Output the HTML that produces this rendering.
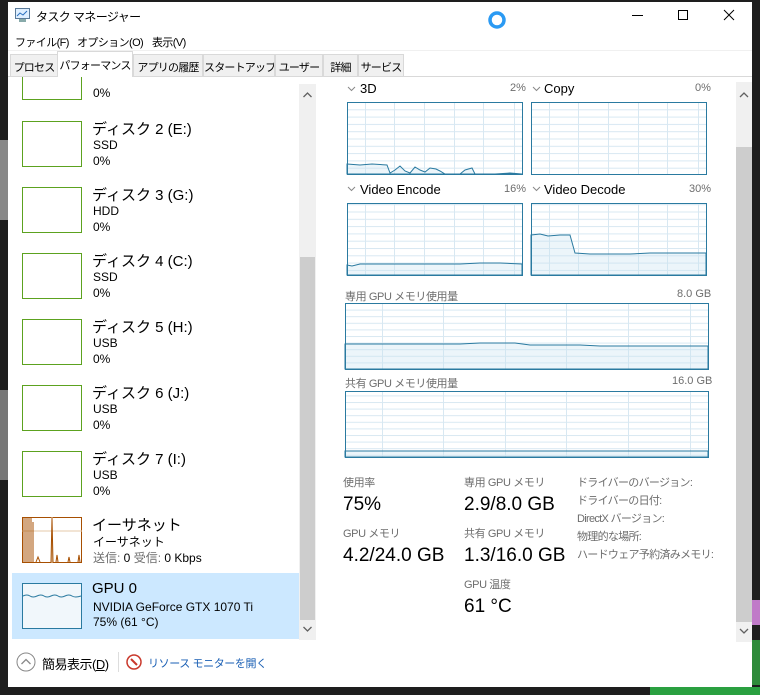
<!DOCTYPE html>
<html><head><meta charset="utf-8"><style>
*{margin:0;padding:0;box-sizing:border-box}
body{width:760px;height:695px;background:#1e1e1e;position:relative;overflow:hidden;font-family:"Liberation Sans","Noto Sans CJK JP",sans-serif;color:#000}
.a{position:absolute;white-space:nowrap}
#win{position:absolute;left:8px;top:2px;width:744px;height:685px;background:#fff}
.t{font-size:12px}
.m{font-size:11px;letter-spacing:-0.6px}
.g{color:#6d6d6d}
.tab{position:absolute;top:54px;height:22px;font-size:11px;letter-spacing:-0.8px;white-space:nowrap;overflow:hidden;padding:4px 0 0;text-align:center;background:#f0f0f0;border:1px solid #d9d9d9;border-bottom:none}
.th{position:absolute;left:22px;width:60px;height:46px;border:1px solid #5ca21f;background:#fff}
.n{font-size:15px}
.s{font-size:12px}
.sm{font-size:11px;letter-spacing:-0.4px}
</style></head><body>
<div class="a" style="left:0;top:140px;width:8px;height:80px;background:#888"></div>
<div class="a" style="left:0;top:390px;width:8px;height:90px;background:#777"></div>
<div class="a" style="left:752px;top:600px;width:8px;height:25px;background:#c07ac8"></div>
<div class="a" style="left:752px;top:640px;width:8px;height:45px;background:#2e8b3a"></div>
<div class="a" style="left:650px;top:687px;width:110px;height:8px;background:#2aa040"></div>
<div id="win"></div>
<!-- title -->
<svg class="a" style="left:15px;top:8px" width="16" height="15"><rect x="0.5" y="0.5" width="14" height="10" fill="#dfefff" stroke="#5a7a99"/><polyline points="2,8 5,5 8,7 12,3" fill="none" stroke="#2a70c0"/><rect x="4" y="11" width="7" height="3" fill="#8aa"/></svg>
<div class="a m" style="left:36px;top:8px;font-size:12px">タスク マネージャー</div>
<svg class="a" style="left:487px;top:10px" width="20" height="20"><circle cx="10" cy="10" r="7" fill="none" stroke="#2b9af3" stroke-width="3.5"/></svg>
<div class="a" style="left:632px;top:15px;width:11px;height:1px;background:#000"></div>
<div class="a" style="left:678px;top:10px;width:10px;height:10px;border:1px solid #000"></div>
<svg class="a" style="left:723px;top:9px" width="12" height="12"><path d="M1 1L11 11M11 1L1 11" stroke="#000"/></svg>
<!-- menu -->
<div class="a m" style="left:15px;top:34px">ファイル(F)</div>
<div class="a m" style="left:77px;top:34px">オプション(O)</div>
<div class="a m" style="left:152px;top:34px">表示(V)</div>
<div class="a" style="left:8px;top:50px;width:744px;height:1px;background:#f0f0f0"></div>
<!-- tabs -->
<div class="tab" style="left:10px;width:48px">プロセス</div>
<div class="tab" style="left:57px;top:51px;height:26px;width:76px;background:#fff;padding-top:5px;z-index:2">パフォーマンス</div>
<div class="tab" style="left:133px;width:70px">アプリの履歴</div>
<div class="tab" style="left:203px;width:72px">スタートアップ</div>
<div class="tab" style="left:275px;width:48px">ユーザー</div>
<div class="tab" style="left:323px;width:35px">詳細</div>
<div class="tab" style="left:358px;width:46px">サービス</div>
<div class="a" style="left:8px;top:76px;width:744px;height:1px;background:#d9d9d9"></div>
<!-- left list -->
<div class="a" style="left:22px;top:77px;width:60px;height:23px;border:1px solid #5ca21f;border-top:none"></div>
<div class="a s" style="left:93px;top:86px">0%</div>
<div class="th" style="top:121px"></div><div class="a n" style="left:92px;top:118px">ディスク 2 (E:)</div><div class="a s" style="left:93px;top:138px">SSD</div><div class="a s" style="left:93px;top:154px">0%</div>
<div class="th" style="top:187px"></div><div class="a n" style="left:92px;top:184px">ディスク 3 (G:)</div><div class="a s" style="left:93px;top:204px">HDD</div><div class="a s" style="left:93px;top:220px">0%</div>
<div class="th" style="top:253px"></div><div class="a n" style="left:92px;top:250px">ディスク 4 (C:)</div><div class="a s" style="left:93px;top:270px">SSD</div><div class="a s" style="left:93px;top:286px">0%</div>
<div class="th" style="top:319px"></div><div class="a n" style="left:92px;top:316px">ディスク 5 (H:)</div><div class="a s" style="left:93px;top:336px">USB</div><div class="a s" style="left:93px;top:352px">0%</div>
<div class="th" style="top:385px"></div><div class="a n" style="left:92px;top:382px">ディスク 6 (J:)</div><div class="a s" style="left:93px;top:402px">USB</div><div class="a s" style="left:93px;top:418px">0%</div>
<div class="th" style="top:451px"></div><div class="a n" style="left:92px;top:448px">ディスク 7 (I:)</div><div class="a s" style="left:93px;top:468px">USB</div><div class="a s" style="left:93px;top:484px">0%</div>
<svg class="a" style="left:22px;top:517px" width="60" height="46"><rect x="0.5" y="0.5" width="59" height="45" fill="#fff" stroke="#a74f01"/><line x1="0" y1="14" x2="60" y2="14" stroke="#e4c9a8"/><line x1="30" y1="0" x2="30" y2="46" stroke="#e4c9a8"/><path d="M1 45V1M3 45V1M5 45V1M7 45V1M9 45V1M11 45V5M14 45L16 40 18 45M29 45L30 1 31 45M34 45L35 38 36 45M46 45L47 40 48 45M56 45L57 38 58 45" stroke="#a74f01" fill="none"/></svg>
<div class="a n" style="left:92px;top:514px">イーサネット</div><div class="a s" style="left:93px;top:533px">イーサネット</div><div class="a s g" style="left:93px;top:549px">送信: <span style="color:#000">0</span> 受信: <span style="color:#000">0 Kbps</span></div>
<div class="a" style="left:12px;top:573px;width:287px;height:66px;background:#cce8ff"></div>
<svg class="a" style="left:22px;top:583px" width="60" height="46"><rect x="0.5" y="0.5" width="59" height="45" fill="#f1f7fb" stroke="#2a7aa0"/><path d="M1 13 Q5 11 8 13 T15 13 T22 13 T29 13 T36 13 T43 13 T50 13 T59 13" stroke="#2a7aa0" fill="none"/></svg>
<div class="a n" style="left:92px;top:580px">GPU 0</div><div class="a s" style="left:93px;top:600px">NVIDIA GeForce GTX 1070 Ti</div><div class="a s" style="left:93px;top:615px">75% (61 °C)</div>
<!-- left scrollbar -->
<div class="a" style="left:299px;top:84px;width:17px;height:556px;background:#f0f0f0"></div>
<div class="a" style="left:300px;top:257px;width:15px;height:363px;background:#cdcdcd"></div>
<svg class="a" style="left:299px;top:84px" width="17" height="556"><path d="M4.5 13L8.5 9 12.5 13M4.5 543L8.5 547 12.5 543" fill="none" stroke="#606060" stroke-width="1.3"/></svg>
<!-- bottom -->
<svg class="a" style="left:16px;top:652px" width="20" height="20"><circle cx="10" cy="10" r="9" fill="none" stroke="#888"/><path d="M5.5 12L10 7.5 14.5 12" fill="none" stroke="#888" stroke-width="1.3"/></svg>
<div class="a" style="left:42px;top:654px;font-size:13px;letter-spacing:-0.5px">簡易表示(<u>D</u>)</div>
<div class="a" style="left:118px;top:652px;width:1px;height:20px;background:#ddd"></div>
<svg class="a" style="left:126px;top:654px" width="16" height="16"><circle cx="8" cy="8" r="7" fill="#fff" stroke="#c9382b" stroke-width="1.5"/><path d="M5 5L11 11" stroke="#c9382b" stroke-width="2"/></svg>
<div class="a sm" style="left:148px;top:655px;color:#1a5fb4">リソース モニターを開く</div>
<!-- right scrollbar -->
<div class="a" style="left:736px;top:82px;width:16px;height:560px;background:#f0f0f0"></div>
<div class="a" style="left:736px;top:147px;width:16px;height:475px;background:#cdcdcd"></div>
<svg class="a" style="left:736px;top:82px" width="16" height="560"><path d="M4 15L8 11 12 15M4 547L8 551 12 547" fill="none" stroke="#606060" stroke-width="1.3"/></svg>
<!-- graph titles -->
<svg class="a" style="left:0;top:0" width="760" height="200"><g fill="none" stroke="#888"><path d="M348 87L351.5 90.5 355 87M533 87L536.5 90.5 540 87M348 187L351.5 190.5 355 187M533 187L536.5 190.5 540 187"/></g></svg>
<div class="a" style="left:360px;top:81px;font-size:13px">3D</div><div class="a g" style="left:510px;top:82px;font-size:11px">2%</div>
<div class="a" style="left:544px;top:81px;font-size:13px">Copy</div><div class="a g" style="left:695px;top:82px;font-size:11px">0%</div>
<div class="a" style="left:360px;top:182px;font-size:13px">Video Encode</div><div class="a g" style="left:504px;top:183px;font-size:11px">16%</div>
<div class="a" style="left:544px;top:182px;font-size:13px">Video Decode</div><div class="a g" style="left:689px;top:183px;font-size:11px">30%</div>
<div class="a g sm" style="left:345px;top:288px">専用 GPU メモリ使用量</div><div class="a g" style="left:677px;top:288px;font-size:11px">8.0 GB</div>
<div class="a g sm" style="left:345px;top:375px">共有 GPU メモリ使用量</div><div class="a g" style="left:672px;top:375px;font-size:11px">16.0 GB</div>
<svg class="a" style="left:0;top:0" width="760" height="695">
<defs>
<pattern id="h" width="10" height="7.3" patternUnits="userSpaceOnUse" y="102"><line x1="0" y1="0.5" x2="10" y2="0.5" stroke="#d8e8f2"/></pattern>
<pattern id="h2" width="10" height="6.6" patternUnits="userSpaceOnUse" y="303"><line x1="0" y1="0.5" x2="10" y2="0.5" stroke="#d8e8f2"/></pattern>
</defs>
<g stroke="#d8e8f2">
<rect x="347" y="102" width="175" height="72" fill="url(#h)" stroke="none"/>
<rect x="531" y="102" width="175" height="72" fill="url(#h)" stroke="none"/>
<rect x="347" y="203" width="175" height="72" fill="url(#h)" stroke="none"/>
<rect x="531" y="203" width="175" height="72" fill="url(#h)" stroke="none"/>
<rect x="345" y="303" width="363" height="66" fill="url(#h2)" stroke="none"/>
<rect x="345" y="391" width="363" height="66" fill="url(#h2)" stroke="none"/>
<path d="M365.5 102v72M394.5 102v72M424.5 102v72M454.5 102v72M483.5 102v72M514.5 102v72
M549.5 102v72M578.5 102v72M608.5 102v72M638.5 102v72M667.5 102v72M698.5 102v72
M365.5 203v72M394.5 203v72M424.5 203v72M454.5 203v72M483.5 203v72M514.5 203v72
M549.5 203v72M578.5 203v72M608.5 203v72M638.5 203v72M667.5 203v72M698.5 203v72
M382.5 303v66M443.5 303v66M505.5 303v66M566.5 303v66M628.5 303v66M690.5 303v66
M382.5 391v66M443.5 391v66M505.5 391v66M566.5 391v66M628.5 391v66M690.5 391v66"/>
</g>
<g stroke="#2a7aa0" stroke-width="1" fill="rgba(200,225,240,0.35)">
<path d="M347 164L360 165 372 164 387 165 390 173 395 170 400 166 405 171 410 173 415 167 420 170 425 172 430 168 436 169 440 171 445 174 460 174 465 170 472 168 475 174 495 174 510 173 522 174V174H347Z"/>
<path d="M347 265L352 266 360 264 380 264 400 264 420 264 440 264 460 264 480 263 500 263 522 264V275H347Z"/>
<path d="M531 235L540 234 548 236 560 235 570 235 575 253 590 254 610 254 630 254 650 253 670 253 690 253 706 253V275H531Z"/>
<path d="M345 344L460 344 480 343 515 343 530 345 580 345 600 346 708 346V369H345Z"/>
<path d="M345 451H708V457H345Z"/>
</g>
<g fill="none" stroke="#2a7aa0">
<rect x="347.5" y="102.5" width="175" height="72"/>
<rect x="531.5" y="102.5" width="175" height="72"/>
<rect x="347.5" y="203.5" width="175" height="72"/>
<rect x="531.5" y="203.5" width="175" height="72"/>
<rect x="345.5" y="303.5" width="363" height="66"/>
<rect x="345.5" y="391.5" width="363" height="66"/>
</g>
</svg>
<!-- stats -->
<div class="a g sm" style="left:343px;top:474px">使用率</div>
<div class="a" style="left:343px;top:494px;font-size:19px">75%</div>
<div class="a g sm" style="left:343px;top:525px">GPU メモリ</div>
<div class="a" style="left:343px;top:545px;font-size:19px">4.2/24.0 GB</div>
<div class="a g sm" style="left:464px;top:474px">専用 GPU メモリ</div>
<div class="a" style="left:464px;top:494px;font-size:19px">2.9/8.0 GB</div>
<div class="a g sm" style="left:464px;top:525px">共有 GPU メモリ</div>
<div class="a" style="left:464px;top:545px;font-size:19px">1.3/16.0 GB</div>
<div class="a g sm" style="left:464px;top:576px">GPU 温度</div>
<div class="a" style="left:464px;top:596px;font-size:19px">61 °C</div>
<div class="a g sm" style="left:577px;top:474px;line-height:18px;letter-spacing:-0.7px">ドライバーのバージョン:<br>ドライバーの日付:<br>DirectX バージョン:<br>物理的な場所:<br>ハードウェア予約済みメモリ:</div>
</body></html>
